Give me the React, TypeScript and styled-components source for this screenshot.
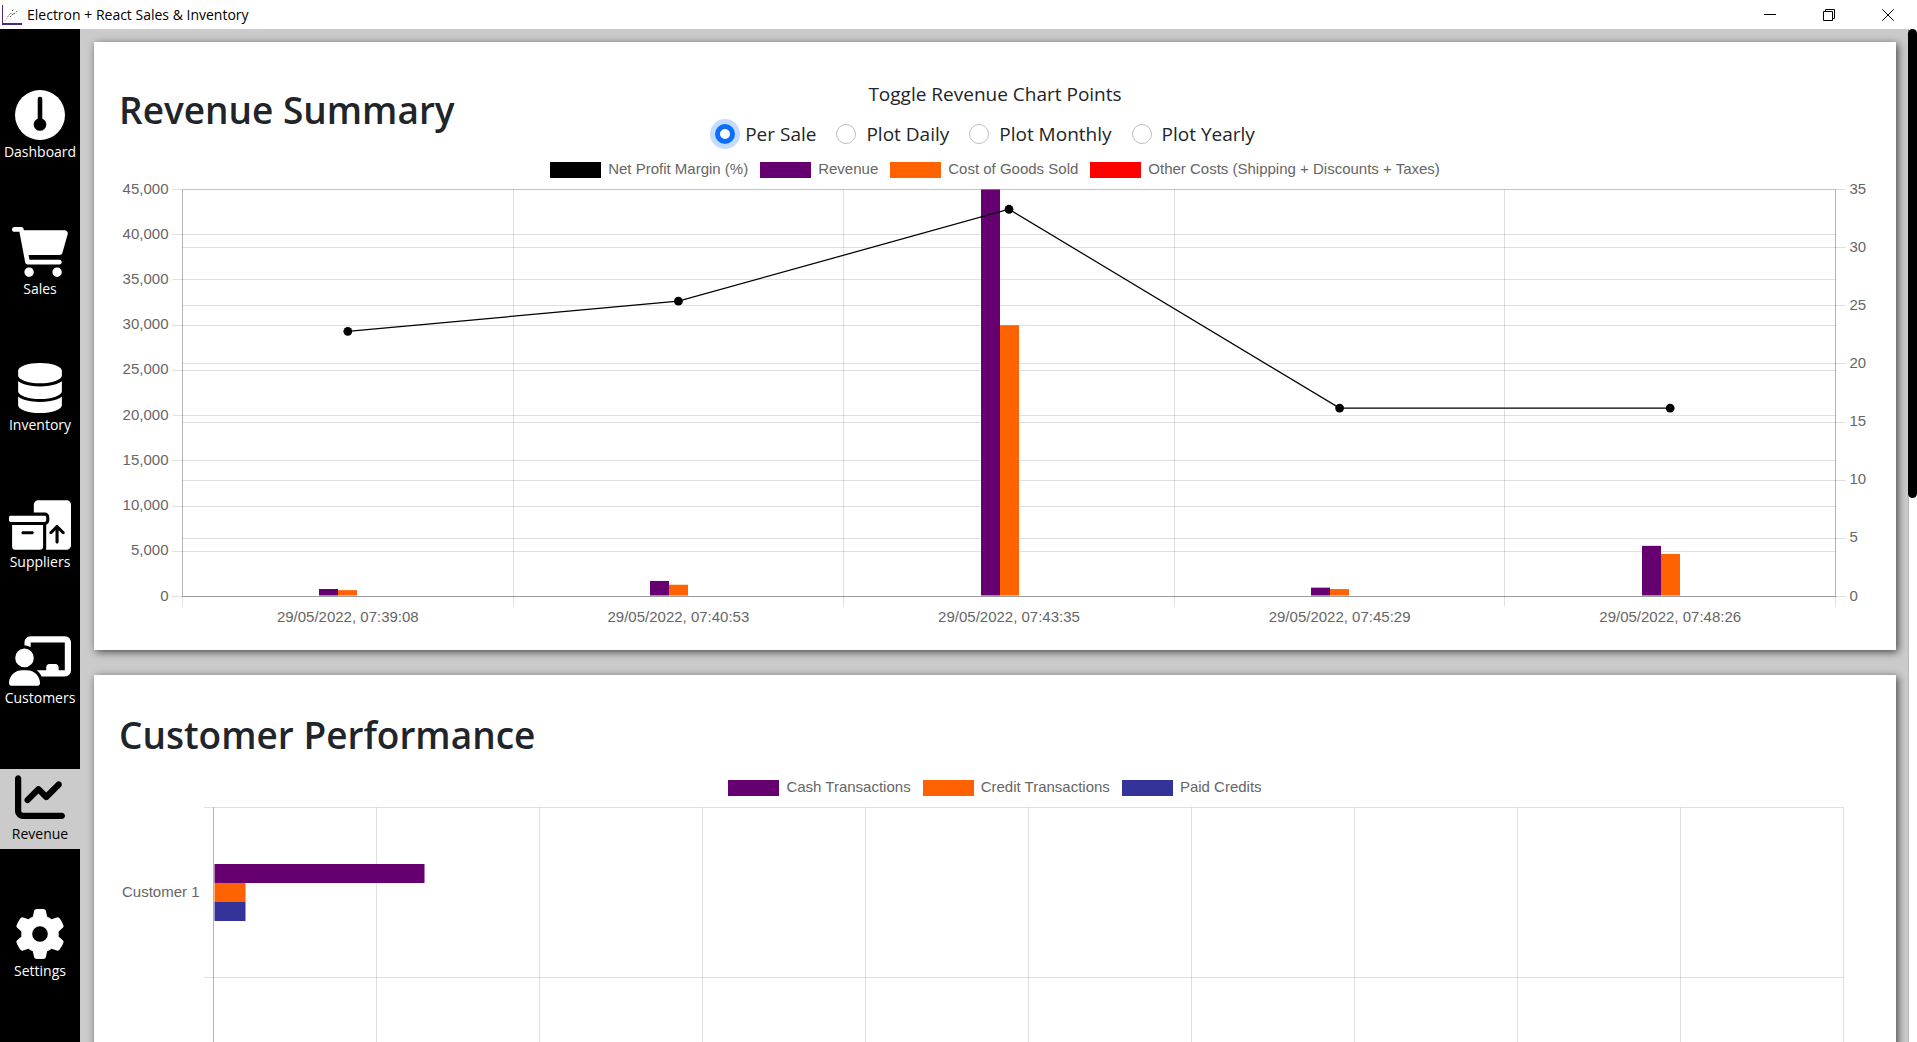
import { useLayoutEffect, useRef, useState } from "react";
import type { ReactNode } from "react";
import styled, { createGlobalStyle } from "styled-components";
import {
  FaBoxesPacking,
  FaChalkboardUser,
  FaChartLine,
  FaDatabase,
  FaGear,
} from "react-icons/fa6";

const colors = {
  backdrop: "#cbcbcb",
  ink: "#212529",
  muted: "#666666",
  purple: "#660070",
  orange: "#ff6200",
  red: "#ff0000",
  blue: "#333399",
  accent: "#0d6efd",
};

const GlobalStyle = createGlobalStyle`
  * { box-sizing: border-box; }
  body {
    margin: 0;
    background: ${colors.backdrop};
    color: ${colors.ink};
    font-family: "Open Sans", "Noto Sans", sans-serif;
  }
`;

/* ---------- window frame ---------- */

const Window = styled.div`
  display: flex;
  flex-direction: column;
  height: 100vh;
  overflow: hidden;
`;

const TitleBar = styled.header`
  display: flex;
  flex: none;
  align-items: center;
  height: 29px;
  padding-left: 2px;
  background: #ffffff;
  color: #000000;
`;

const AppName = styled.span`
  flex: 1;
  padding-left: 5px;
  font-size: 14px;
  line-height: 20px;
`;

const WindowButton = styled.button`
  display: flex;
  align-items: center;
  justify-content: center;
  width: 59px;
  height: 29px;
  padding: 0;
  border: 0;
  background: none;
`;

const Body = styled.div`
  display: flex;
  flex: 1;
  min-height: 0;
`;

/* ---------- sidebar ---------- */

const Sidebar = styled.nav`
  display: flex;
  flex: none;
  flex-direction: column;
  justify-content: space-evenly;
  width: 80px;
  padding-top: 2px;
  background: #000000;
`;

const NavItem = styled.a<{ $active?: boolean }>`
  display: flex;
  flex-direction: column;
  align-items: center;
  height: 80px;
  padding-top: 3px;
  background: ${(p) => (p.$active ? colors.backdrop : "transparent")};
  color: ${(p) => (p.$active ? "#000000" : "#ffffff")};
  font-size: 14px;
  line-height: 24px;
  text-decoration: none;
`;

const NavIcon = styled.span<{ $width: number }>`
  display: block;
  flex: none;

  svg {
    display: block;
    width: ${(p) => p.$width}px;
    height: 50px;
  }
`;

/* ---------- content ---------- */

const Content = styled.main`
  display: flex;
  flex: 1;
  flex-direction: column;
  gap: 25px;
  min-width: 0;
  padding: 13px 12px 13px 14px;
  overflow: hidden;
`;

const Card = styled.section`
  flex: none;
  padding: 25px;
  background: #ffffff;
  box-shadow: 2px 2px 8px 0 rgba(0, 0, 0, 0.65);
`;

const CardHeader = styled.div`
  display: grid;
  grid-template-columns: 1fr auto 1fr;
  align-items: center;
  height: 90px;
`;

const CardTitle = styled.h1`
  margin: 0;
  padding-bottom: 4px;
  font-size: 37px;
  font-weight: 600;
  line-height: 48px;
`;

const PointToggle = styled.fieldset`
  margin: 0;
  padding: 3px 0 0;
  border: 0;
  text-align: center;
  font-size: 19px;
  line-height: 30px;
`;

const ToggleCaption = styled.legend`
  width: 100%;
  padding: 3px 0 7px;
`;

const ToggleRow = styled.div`
  display: flex;
`;

const ToggleOption = styled.label`
  display: flex;
  align-items: center;
  gap: 10px;
  margin-right: 20px;
`;

const Radio = styled.input`
  appearance: none;
  width: 20px;
  height: 20px;
  margin: 0;
  border: 1px solid #bfbfbf;
  border-radius: 50%;
  background: #ffffff;

  &:checked {
    border: 5px solid ${colors.accent};
    box-shadow: 0 0 0 5px #c2dbfe;
  }
`;

const Legend = styled.ul`
  display: flex;
  flex-wrap: wrap;
  justify-content: center;
  gap: 12px;
  margin: 0;
  padding: 0;
  list-style: none;
  color: ${colors.muted};
  font-family: "Liberation Sans", Arial, sans-serif;
  font-size: 15px;
  line-height: 14px;
`;

const LegendItem = styled.li`
  display: flex;
  align-items: flex-start;
  gap: 7px;
`;

const Swatch = styled.span<{ $color: string }>`
  width: 51px;
  height: 16px;
  background: ${(p) => p.$color};
`;

const RevenueLegend = styled(Legend)`
  padding: 5px 0 2px;
`;

const CustomerHeader = styled.div`
  display: flex;
  align-items: center;
  height: 74px;
`;

const CustomerLegend = styled(Legend)`
  padding: 6px 0 2px;
`;

const ChartFrame = styled.div`
  width: 100%;

  svg {
    display: block;
    width: 100%;
  }

  text {
    fill: ${colors.muted};
    font-family: "Liberation Sans", Arial, sans-serif;
    font-size: 15px;
  }
`;

const GridLine = styled.path`
  fill: none;
  stroke: rgba(0, 0, 0, 0.12);
  stroke-width: 1px;
`;

const AxisLine = styled.path`
  fill: none;
  stroke: rgba(0, 0, 0, 0.2);
  stroke-width: 1px;
`;

const ScrollTrack = styled.div`
  flex: none;
  width: 9px;
  border-left: 1px solid #b5b5b5;
  background: #ffffff;
`;

const ScrollThumb = styled.div`
  height: 46.3%;
  margin-left: -1px;
  border-radius: 5px;
  background: #000000;
`;

/* ---------- icons ---------- */

const AppIcon = () => (
  <svg width="20" height="20" viewBox="0 0 20 20" aria-hidden="true">
    <path d="M0.5 0V19" stroke="#4b2a7b" strokeWidth="1" />
    <path d="M0 19H20" stroke="#4b2a7b" strokeWidth="2" />
    <path d="M2.5 16L6 12" stroke="#b0a0a0" strokeWidth="1" strokeDasharray="1.5 1" />
    <path d="M5.5 12L9 8L11 10L16 5" fill="none" stroke="#9a6a4a" strokeWidth="1" strokeDasharray="2 1" />
    <path d="M8 12L12 8L13 9M10 6L12 4" fill="none" stroke="#5a4a5a" strokeWidth="1" strokeDasharray="1.5 1" />
  </svg>
);

const GaugeIcon = () => (
  <svg viewBox="0 0 50 50" aria-hidden="true">
    <circle cx="25" cy="25" r="25" fill="currentColor" />
    <path d="M25 9V34" stroke="#000000" strokeWidth="4.6" strokeLinecap="round" />
    <circle cx="25" cy="34.5" r="6.3" fill="#000000" />
  </svg>
);

const CartIcon = () => (
  <svg viewBox="0 0 576 512" fill="currentColor" aria-hidden="true">
    <path d="M96 0C107.5 0 117.4 8.19 119.6 19.51L121.1 32H541.8C562.1 32 578.3 52.25 572.6 72.66L518.6 264.7C514.7 278.5 502.1 288 487.8 288H170.7L179.9 336H488C501.3 336 512 346.7 512 360C512 373.3 501.3 384 488 384H159.1C148.5 384 138.4 375.8 136.2 364.5L76.14 48H24C10.75 48 0 37.25 0 24C0 10.75 10.75 0 24 0H96zM128 464C128 437.5 149.5 416 176 416C202.5 416 224 437.5 224 464C224 490.5 202.5 512 176 512C149.5 512 128 490.5 128 464zM512 464C512 490.5 490.5 512 464 512C437.5 512 416 490.5 416 464C416 437.5 437.5 416 464 416C490.5 416 512 437.5 512 464z" />
  </svg>
);

const MinimizeIcon = () => (
  <svg width="12" height="12" viewBox="0 0 12 12" aria-hidden="true">
    <path d="M0 5.5H12" stroke="#000000" />
  </svg>
);

const RestoreIcon = () => (
  <svg width="12" height="12" viewBox="0 0 12 12" fill="none" stroke="#000000" aria-hidden="true">
    <path d="M0.5 2.5H9.5V11.5H0.5Z" />
    <path d="M2.5 2.5V0.5H11.5V9.5H9.5" />
  </svg>
);

const CloseIcon = () => (
  <svg width="12" height="12" viewBox="0 0 12 12" stroke="#000000" aria-hidden="true">
    <path d="M0.3 0.3L11.7 11.7M11.7 0.3L0.3 11.7" />
  </svg>
);

/* ---------- data ---------- */

const navItems: { label: string; icon: ReactNode; width: number; active?: boolean }[] = [
  { label: "Dashboard", icon: <GaugeIcon />, width: 50 },
  { label: "Sales", icon: <CartIcon />, width: 56 },
  { label: "Inventory", icon: <FaDatabase />, width: 44 },
  { label: "Suppliers", icon: <FaBoxesPacking />, width: 62 },
  { label: "Customers", icon: <FaChalkboardUser />, width: 62 },
  { label: "Revenue", icon: <FaChartLine />, width: 50, active: true },
  { label: "Settings", icon: <FaGear />, width: 50 },
];

const plotModes = ["Per Sale", "Plot Daily", "Plot Monthly", "Plot Yearly"];

const sales = [
  { time: "29/05/2022, 07:39:08", revenue: 830, cost: 700, margin: 22.8 },
  { time: "29/05/2022, 07:40:53", revenue: 1720, cost: 1300, margin: 25.4 },
  { time: "29/05/2022, 07:43:35", revenue: 45000, cost: 30000, margin: 33.3 },
  { time: "29/05/2022, 07:45:29", revenue: 980, cost: 820, margin: 16.2 },
  { time: "29/05/2022, 07:48:26", revenue: 5600, cost: 4700, margin: 16.2 },
];

const revenueSeries = [
  { name: "Net Profit Margin (%)", color: "#000000" },
  { name: "Revenue", color: colors.purple },
  { name: "Cost of Goods Sold", color: colors.orange },
  { name: "Other Costs (Shipping + Discounts + Taxes)", color: colors.red },
];

const customerSeries = [
  { name: "Cash Transactions", color: colors.purple, share: 0.129 },
  { name: "Credit Transactions", color: colors.orange, share: 0.019 },
  { name: "Paid Credits", color: colors.blue, share: 0.019 },
];

/* ---------- charts ---------- */

function useWidth() {
  const ref = useRef<HTMLDivElement>(null);
  const [width, setWidth] = useState(0);
  useLayoutEffect(() => {
    const node = ref.current;
    if (!node) return;
    const update = () => setWidth(node.clientWidth);
    update();
    const observer = new ResizeObserver(update);
    observer.observe(node);
    return () => observer.disconnect();
  }, []);
  return { ref, width };
}

const crisp = (value: number) => Math.floor(value) + 0.5;

function RevenueChart() {
  const { ref, width } = useWidth();
  const left = 63.5;
  const right = width - 35.5;
  const top = 9.5;
  const bottom = 416.5;
  const plot = bottom - top;
  const band = (right - left) / sales.length;
  const bar = 19;
  const amountTicks = Array.from({ length: 10 }, (_, i) => i * 5000);
  const percentTicks = Array.from({ length: 8 }, (_, i) => i * 5);
  const amountY = (v: number) => bottom - (v / 45000) * plot;
  const percentY = (v: number) => bottom - (v / 35) * plot;
  const center = (i: number) => left + band * (i + 0.5);

  return (
    <ChartFrame ref={ref}>
      {width > 0 && (
        <svg height="445" role="img" aria-label="Revenue per sale">
          {amountTicks.map((v) => (
            <g key={v}>
              <GridLine d={`M${left - 10} ${crisp(amountY(v))}H${right}`} />
              <text x={left - 14} y={amountY(v) + 4} textAnchor="end">
                {v.toLocaleString("en-US")}
              </text>
            </g>
          ))}
          {percentTicks.map((v) => (
            <g key={v}>
              <GridLine d={`M${left} ${crisp(percentY(v))}H${right + 10}`} />
              <text x={right + 14} y={percentY(v) + 4}>
                {v}
              </text>
            </g>
          ))}
          {Array.from({ length: sales.length + 1 }, (_, i) => (
            <GridLine key={i} d={`M${crisp(left + band * i)} ${top}V${bottom + 10}`} />
          ))}
          <AxisLine d={`M${left} ${top}V${bottom}H${right}V${top}`} />
          {sales.map((s, i) => {
            const x = Math.round(center(i) - bar * 1.5);
            return (
              <g key={s.time}>
                <rect x={x} y={amountY(s.revenue)} width={bar} height={bottom - amountY(s.revenue) - 1} fill={colors.purple} />
                <rect x={x + bar} y={amountY(s.cost)} width={bar} height={bottom - amountY(s.cost) - 1} fill={colors.orange} />
                <text x={center(i)} y={442} textAnchor="middle">
                  {s.time}
                </text>
              </g>
            );
          })}
          <polyline
            points={sales.map((s, i) => `${center(i)},${percentY(s.margin)}`).join(" ")}
            fill="none"
            stroke="#000000"
            strokeWidth="1.25"
          />
          {sales.map((s, i) => (
            <circle key={s.time} cx={center(i)} cy={percentY(s.margin)} r="4.4" fill="#000000" />
          ))}
        </svg>
      )}
    </ChartFrame>
  );
}

function CustomerChart() {
  const { ref, width } = useWidth();
  const left = 94.5;
  const right = width - 27.5;
  const top = 9.5;
  const band = 170;
  const rows = 2;
  const bottom = top + band * rows;
  const step = (right - left) / 10;
  const bar = 19;
  const firstBar = Math.round(top + band / 2 - bar * 1.5);

  return (
    <ChartFrame ref={ref}>
      {width > 0 && (
        <svg height={bottom + 10} role="img" aria-label="Transactions per customer">
          {Array.from({ length: rows + 1 }, (_, i) => (
            <GridLine key={i} d={`M${left - 10} ${top + band * i}H${right}`} />
          ))}
          {Array.from({ length: 11 }, (_, i) => (
            <GridLine key={i} d={`M${crisp(left + step * i)} ${top}V${bottom}`} />
          ))}
          <AxisLine d={`M${left} ${top}V${bottom}`} />
          {customerSeries.map((s, i) => (
            <rect
              key={s.name}
              x={left + 1}
              y={firstBar + bar * i}
              width={Math.round((right - left) * s.share)}
              height={bar}
              fill={s.color}
            />
          ))}
          <text x={left - 14} y={top + band / 2 + 4} textAnchor="end">
            Customer 1
          </text>
        </svg>
      )}
    </ChartFrame>
  );
}

/* ---------- app ---------- */

export default function App() {
  const [mode, setMode] = useState(plotModes[0]);

  return (
    <Window>
      <GlobalStyle />
      <TitleBar>
        <AppIcon />
        <AppName>Electron + React Sales &amp; Inventory</AppName>
        <WindowButton type="button" aria-label="Minimize">
          <MinimizeIcon />
        </WindowButton>
        <WindowButton type="button" aria-label="Restore">
          <RestoreIcon />
        </WindowButton>
        <WindowButton type="button" aria-label="Close">
          <CloseIcon />
        </WindowButton>
      </TitleBar>
      <Body>
        <Sidebar>
          {navItems.map((item) => (
            <NavItem key={item.label} href="#" $active={item.active}>
              <NavIcon $width={item.width}>{item.icon}</NavIcon>
              {item.label}
            </NavItem>
          ))}
        </Sidebar>
        <Content>
          <Card>
            <CardHeader>
              <CardTitle>Revenue Summary</CardTitle>
              <PointToggle>
                <ToggleCaption>Toggle Revenue Chart Points</ToggleCaption>
                <ToggleRow>
                  {plotModes.map((name) => (
                    <ToggleOption key={name}>
                      <Radio type="radio" name="plot" checked={mode === name} onChange={() => setMode(name)} />
                      {name}
                    </ToggleOption>
                  ))}
                </ToggleRow>
              </PointToggle>
            </CardHeader>
            <RevenueLegend>
              {revenueSeries.map((s) => (
                <LegendItem key={s.name}>
                  <Swatch $color={s.color} />
                  {s.name}
                </LegendItem>
              ))}
            </RevenueLegend>
            <RevenueChart />
          </Card>
          <Card>
            <CustomerHeader>
              <CardTitle>Customer Performance</CardTitle>
            </CustomerHeader>
            <CustomerLegend>
              {customerSeries.map((s) => (
                <LegendItem key={s.name}>
                  <Swatch $color={s.color} />
                  {s.name}
                </LegendItem>
              ))}
            </CustomerLegend>
            <CustomerChart />
          </Card>
        </Content>
        <ScrollTrack>
          <ScrollThumb />
        </ScrollTrack>
      </Body>
    </Window>
  );
}
